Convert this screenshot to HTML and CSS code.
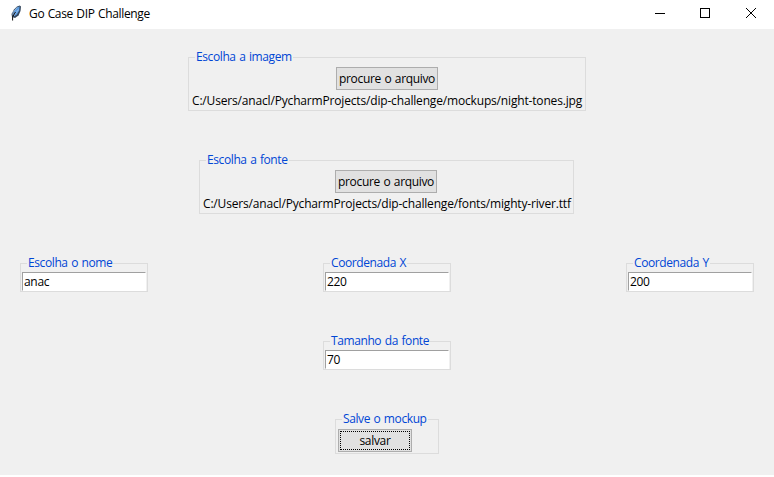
FILE: index.html
```html
<!DOCTYPE html>
<html lang="pt-BR">
<head>
<meta charset="utf-8">
<title>Go Case DIP Challenge</title>
<link rel="stylesheet" href="styles.css">
</head>
<body>
<div class="window">
  <header class="titlebar">
    <svg class="feather" width="12" height="16" viewBox="0 0 12 16">
      <path d="M9.8 .5 11 1.5 10.5 6 8.5 10.5 5 13 2 12 1.5 9 4 4.5 7 1.5Z" fill="#35485e"/>
      <path d="M9.6 1.3 9.2 5.5 6.7 9.7 3.6 11.5 3.6 7.5 6.3 3.3Z" fill="#5b9be0"/>
      <path d="M7.5 2 3 7.5V10M8.5 4.5 3.5 11" fill="none" stroke="#a3c7ee" stroke-width=".8"/>
      <path d="M5.5 7 2.6 12V15.5" fill="none" stroke="#111" stroke-width="1"/>
    </svg>
    <h1 class="title">Go Case DIP Challenge</h1>
    <svg class="controls" width="138" height="28" viewBox="0 0 138 28" fill="none" stroke="#000" shape-rendering="crispEdges">
      <path d="M19 13.5h10"/>
      <rect x="64.5" y="8.5" width="9" height="9"/>
      <path d="M110 8l10 10M120 8l-10 10" shape-rendering="auto"/>
    </svg>
  </header>
  <main class="form">
    <fieldset class="frame image-frame">
      <legend>Escolha a imagem</legend>
      <button class="button browse">procure o arquivo</button>
      <p class="path">C:/Users/anacl/PycharmProjects/dip-challenge/mockups/night-tones.jpg</p>
    </fieldset>
    <fieldset class="frame font-frame">
      <legend>Escolha a fonte</legend>
      <button class="button browse">procure o arquivo</button>
      <p class="path">C:/Users/anacl/PycharmProjects/dip-challenge/fonts/mighty-river.ttf</p>
    </fieldset>
    <div class="row">
      <fieldset class="frame entry-frame">
        <legend>Escolha o nome</legend>
        <input class="entry" value="anac">
      </fieldset>
      <fieldset class="frame entry-frame">
        <legend>Coordenada X</legend>
        <input class="entry" value="220">
      </fieldset>
      <fieldset class="frame entry-frame">
        <legend>Coordenada Y</legend>
        <input class="entry" value="200">
      </fieldset>
    </div>
    <fieldset class="frame entry-frame size-frame">
      <legend>Tamanho da fonte</legend>
      <input class="entry" value="70">
    </fieldset>
    <fieldset class="frame save-frame">
      <legend>Salve o mockup</legend>
      <button class="button save"><span class="focus">salvar</span></button>
    </fieldset>
  </main>
</div>
</body>
</html>
```
FILE: styles.css
```css
* { box-sizing: border-box; }
body {
  margin: 0;
  background: #fff;
  color: #000;
  font: 12px/16px "Open Sans", "Noto Sans", sans-serif;
  overflow: hidden;
}
.window { width: 774px; height: 475px; display: flex; flex-direction: column; }
.titlebar { height: 29px; display: flex; align-items: flex-start; background: #fff; }
.feather { margin: 5px 7px 0 10px; }
.title { margin: 6px 0 0; font: inherit; letter-spacing: -.34px; word-spacing: .6px; flex: 1; white-space: nowrap; }
.controls { flex: none; }
.form {
  flex: 1;
  display: flex;
  flex-direction: column;
  align-items: center;
  padding: 20px 20px 0;
  background: #f0f0f0;
}
.frame {
  margin: 0;
  padding: 0;
  border: 1px solid #dcdcdc;
  min-width: 0;
  letter-spacing: -.4px;
  word-spacing: .8px;
}
.frame legend { margin-left: 6px; padding: 0 1px; height: 16px; color: #0046d5; white-space: nowrap; }
.image-frame { width: 398px; height: 62px; }
.font-frame { width: 375px; height: 62px; margin: 41px 1px 0 0; }
.button {
  display: block;
  padding: 0;
  border: 1px solid #adadad;
  border-radius: 0;
  background: #e1e1e1;
  color: #000;
  font: inherit;
  letter-spacing: inherit;
  word-spacing: inherit;
  white-space: nowrap;
}
.browse { width: 102px; height: 23px; margin: 2px auto 0; padding-top: 1px; letter-spacing: -.35px; }
.font-frame .browse { margin-left: 135px; }
.path { margin: 3px 0 0 3px; white-space: nowrap; letter-spacing: -.17px; }
.row { width: 734px; margin-top: 41px; display: flex; justify-content: space-between; }
.entry-frame { width: 128px; height: 37px; }
.entry {
  display: block;
  width: 124px;
  height: 19px;
  margin: 1px 0 0 1px;
  padding: 0 0 0 1px;
  border: 1px solid #fff;
  border-top-color: #a0a0a0;
  border-left-color: #a0a0a0;
  border-radius: 0;
  background: #fff;
  color: #000;
  font: inherit;
  letter-spacing: -.3px;
  outline: 0;
}
.size-frame { margin-top: 41px; }
.save-frame { width: 104px; height: 43px; margin-top: 41px; }
.save { width: 74px; height: 23px; margin: 2px 0 0 2px; padding: 1px; letter-spacing: -.3px; }
.focus { display: block; height: 19px; border: 1px dotted #000; line-height: 18px; }
```
